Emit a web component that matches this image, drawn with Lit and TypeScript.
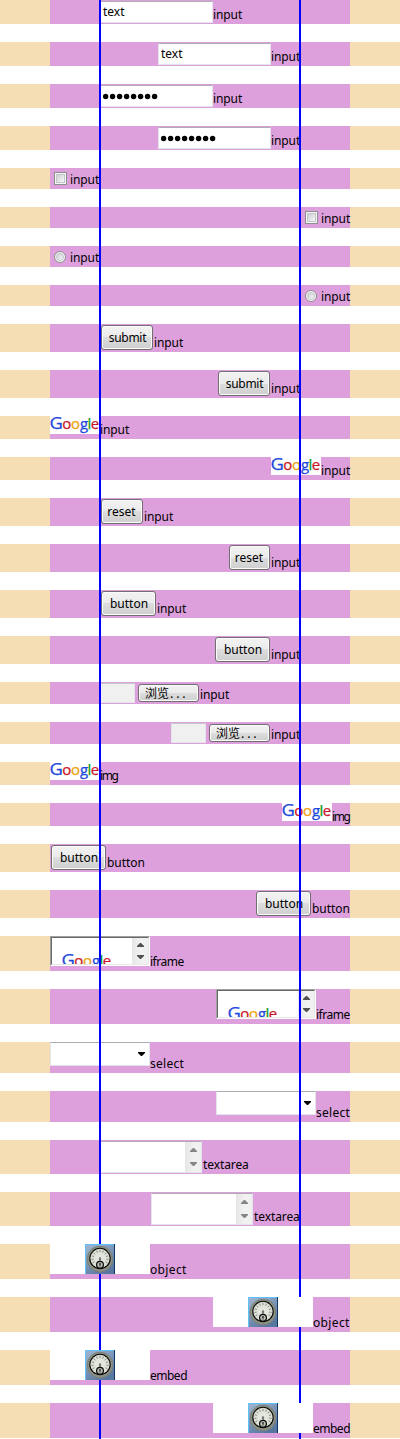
import { LitElement, html, css, svg, TemplateResult } from "lit";
import { customElement, property } from "lit/decorators.js";
import { classMap } from "lit/directives/class-map.js";
import { styleMap } from "lit/directives/style-map.js";

type Kind =
  | "text" | "password" | "checkbox" | "radio" | "submit" | "reset" | "button"
  | "file" | "image" | "iframe" | "select" | "textarea" | "object";

interface Sample {
  kind: Kind;
  label: string;
  height: number;
  /** Free space before the control when it is aligned to the left. */
  start: number;
  /** Free space after the label when it is aligned to the right. */
  end: number;
}

const SAMPLES: Sample[] = [
  { kind: "text", label: "input", height: 24, start: 50, end: 50 },
  { kind: "password", label: "input", height: 24, start: 50, end: 50 },
  { kind: "checkbox", label: "input", height: 21, start: 0, end: 0 },
  { kind: "radio", label: "input", height: 21, start: 0, end: 0 },
  { kind: "submit", label: "input", height: 28, start: 50, end: 50 },
  { kind: "image", label: "input", height: 23, start: 0, end: 0 },
  { kind: "reset", label: "input", height: 28, start: 50, end: 50 },
  { kind: "button", label: "input", height: 28, start: 50, end: 50 },
  { kind: "file", label: "input", height: 22, start: 50, end: 50 },
  { kind: "image", label: "img", height: 23, start: 0, end: 0 },
  { kind: "button", label: "button", height: 28, start: 0, end: 0 },
  { kind: "iframe", label: "iframe", height: 35, start: 0, end: 0 },
  { kind: "select", label: "select", height: 31, start: 0, end: 0 },
  { kind: "textarea", label: "textarea", height: 34, start: 50, end: 50 },
  { kind: "object", label: "object", height: 35, start: 0, end: 0 },
  { kind: "object", label: "embed", height: 35, start: 0, end: 0 },
];

/** Label name to [width, tracking] in pixels. */
const LABELS: Record<string, [number, number]> = {
  input: [29, -0.1], img: [18, -1.4], button: [38, -0.05], iframe: [34, -0.5],
  select: [34, 0.28], textarea: [46, -0.1], object: [37, 0.35], embed: [37, -0.5],
};

const logo = () => html`
  <svg class="logo" width="50" height="18" viewBox="0 0 50 18">
    <g font-family="Open Sans, sans-serif" font-size="15" stroke-width="0.25">
      <text x="-0.4" y="13" font-size="16" textLength="13.4" lengthAdjust="spacingAndGlyphs"
        fill="#1c48dc" stroke="#1c48dc">G</text>
      <text x="12.2" y="13" fill="#cc1426" stroke="#cc1426">o</text>
      <text x="21.1" y="13" fill="#eda20c" stroke="#eda20c">o</text>
      <text x="29.9" y="13" fill="#1c48dc" stroke="#1c48dc">g</text>
      <text x="37.4" y="13" fill="#0c981c" stroke="#0c981c">l</text>
      <text x="40.7" y="13" fill="#cc1426" stroke="#cc1426">e</text>
    </g>
  </svg>`;

const arrow = (up: boolean) => html`
  <svg width="7" height="4" viewBox="0 0 7 4">
    <path fill="currentColor" d=${up ? "M3 0h1l3 3v1H0V3z" : "M0 0h7v1L4 4H3L0 1z"}></path>
  </svg>`;

const scrollbar = () => html`<span class="scroll">${arrow(true)}${arrow(false)}</span>`;

const ticks = Array.from({ length: 11 }, (_, i) => {
  const a = ((150 + i * 24) * Math.PI) / 180;
  const c = Math.cos(a);
  const s = Math.sin(a);
  return svg`<line x1=${15 + 6.4 * c} y1=${14.5 + 6.4 * s} x2=${15 + 8.6 * c} y2=${14.5 + 8.6 * s}
    stroke="#7a7f78" stroke-width="0.9"></line>`;
});

const dial = () => html`
  <svg width="30" height="30" viewBox="0 0 30 30">
    <defs>
      <linearGradient id="bg" x1="0" y1="0" x2="0.6" y2="1">
        <stop offset="0" stop-color="#a3b8d2"></stop>
        <stop offset="1" stop-color="#58779f"></stop>
      </linearGradient>
      <radialGradient id="face">
        <stop offset="0" stop-color="#e8ebe2"></stop>
        <stop offset="1" stop-color="#d8dcd2"></stop>
      </radialGradient>
    </defs>
    <rect width="30" height="30" fill="url(#bg)"></rect>
    <path d="M29 0h1v30h-1z" fill="#0d3768"></path>
    <path d="M0 0h29v1H1v29H0z" fill="#5cc4fa"></path>
    <circle cx="15" cy="15" r="12.8" fill="#8c9085" stroke="#7b8178"></circle>
    <circle cx="15" cy="14.5" r="10.2" fill="url(#face)" stroke="#080a08" stroke-width="1.1"></circle>
    ${ticks}
    <path d="M15 13v4M13.8 15h2.4" stroke="#555" stroke-width="1"></path>
    <circle cx="15" cy="20.7" r="3.4" fill="#b9beb4" stroke="#080a08" stroke-width="1.2"></circle>
    <path d="M15 19v3.5M14 20h2" stroke="#333" stroke-width="1"></path>
  </svg>`;

@customElement("form-sample")
class FormSample extends LitElement {
  @property({ attribute: false }) sample!: Sample;
  @property({ type: Boolean }) right = false;

  static styles = css`
    :host { display: block; padding: 0 50px; background: #f5deb3; }
    .band {
      display: flex; align-items: flex-start; box-sizing: border-box;
      background: #dda0dd; white-space: nowrap;
    }
    .right { justify-content: flex-end; }
    .label { flex: none; align-self: flex-end; line-height: 19px; }
    .band > :not(.label), svg { flex: none; display: block; }
    .field {
      box-sizing: border-box; background: #fff; border: 1px solid #e2e6ec;
      border-top-color: #abadb3; border-radius: 1px;
    }
    .band > .line { width: 113px; height: 22px; margin-top: 1px; padding-left: 2px; line-height: 19px; }
    .band > .area { display: flex; justify-content: flex-end; width: 102px; height: 32px; margin: 1px 1px 0 0; }
    .band > .drop {
      display: flex; align-items: center; justify-content: flex-end;
      width: 100px; height: 24px; padding-right: 4px;
    }
    .band > .path { width: 35px; height: 20px; margin: 1px 3px 0 0; background: #f0f0f0; border-top-color: #c5c8cd; }
    .check {
      box-sizing: border-box; width: 13px; height: 13px; margin: 4px 3px 0 4px;
      border: 1px solid #8e8f8f; background: #f4f4f4; padding: 1px;
    }
    .mark {
      display: block; box-sizing: border-box; width: 9px; height: 9px;
      border: 1px solid #c3c7cc; background: linear-gradient(135deg, #cbcfd5, #f6f6f6);
    }
    .check.round { width: 12px; height: 12px; margin: 5px 4px 0 4px; border-radius: 50%; }
    .round .mark { width: 8px; height: 8px; border-radius: 50%; }
    .push {
      box-sizing: border-box; width: 55px; height: 25px; margin: 1px 1px 0 1px;
      border: 1px solid #707070; border-radius: 3px; text-align: center; line-height: 23px;
      background: linear-gradient(#f2f2f2, #ebebeb 50%, #dddddd 50%, #cfcfcf);
      box-shadow: inset 0 0 0 1px #fbfbfb; padding-left: 1px;
    }
    .submit { width: 52px; letter-spacing: -0.3px; }
    .reset { width: 42px; padding: 0 1px 0 0; }
    .right .reset { width: 41px; }
    .browse {
      width: 61px; height: 18px; margin: 2px 1px 0 0; padding: 0 0 0 6px; text-align: left;
      font: 12px/15px "Noto Sans CJK SC", sans-serif;
    }
    .dots { letter-spacing: 2.8px; margin-left: 1px; }
    .logo { background: #fff; overflow: visible; }
    .band > .frame {
      display: flex; justify-content: space-between; box-sizing: border-box;
      width: 100px; height: 30px; background: #fff; overflow: hidden;
      border: 1px solid #a0a0a0; border-right-color: #fff; border-bottom-color: #fff;
    }
    .view {
      display: flex; flex: 1; justify-content: space-between; overflow: hidden;
      border: 1px solid #696969; border-right-color: #e8e8e8; border-bottom-color: #e8e8e8;
    }
    .view .logo { margin: 15px 0 0 10px; }
    .scroll {
      display: flex; flex-direction: column; align-items: center; justify-content: space-between;
      box-sizing: border-box; width: 16px; padding: 5px 0; color: #505050;
      background: linear-gradient(90deg, #e6e6e6, #f2f2f2 60%, #efefef);
    }
    .area .scroll { color: #858585; padding: 6px 0; }
    .plugin { position: relative; z-index: 2; width: 100px; height: 30px; background: #fff; }
    .plugin svg { margin: 0 auto; }
  `;

  private control(): TemplateResult {
    const { kind } = this.sample;
    switch (kind) {
      case "text":
        return html`<span class="field line">text</span>`;
      case "password":
        return html`<span class="field line"><svg width="60" height="20" viewBox="0 0 60 20">
          ${Array.from({ length: 8 }, (_, i) => svg`<circle cx=${2.6 + i * 7} cy="10.5" r="2.7"></circle>`)}
        </svg></span>`;
      case "checkbox":
        return html`<span class="check"><span class="mark"></span></span>`;
      case "radio":
        return html`<span class="check round"><span class="mark"></span></span>`;
      case "file":
        return html`<span class="field path"></span><span class="push browse">浏览<span class="dots">...</span></span>`;
      case "image":
        return logo();
      case "iframe":
        return html`<span class="frame"><span class="view">${logo()}${scrollbar()}</span></span>`;
      case "select":
        return html`<span class="field drop">${arrow(false)}</span>`;
      case "textarea":
        return html`<span class="field area">${scrollbar()}</span>`;
      case "object":
        return html`<span class="plugin">${dial()}</span>`;
      default:
        return html`<span class="push ${kind}">${kind}</span>`;
    }
  }

  render() {
    const { height, start, end, label } = this.sample;
    const [width, tracking] = LABELS[label];
    return html`<div
      class=${classMap({ band: true, right: this.right })}
      style=${styleMap({
        height: `${height}px`,
        paddingLeft: this.right ? "0" : `${start}px`,
        paddingRight: this.right ? `${end}px` : "0",
      })}
    >${this.control()}<span class="label" style=${styleMap({
      width: `${width}px`,
      letterSpacing: `${tracking}px`,
    })}>${label}</span></div>`;
  }
}

@customElement("app-root")
class AppRoot extends LitElement {
  static styles = css`
    :host {
      display: block; position: relative; width: 400px; height: 1439px; overflow: hidden;
      background: #fff; color: #000; font: 12px "Noto Sans", sans-serif;
    }
    .list { display: flex; flex-direction: column; gap: 18px; }
    .guide { position: absolute; z-index: 1; top: 0; bottom: 0; width: 2px; background: #00f; }
    .first { left: 99px; }
    .second { left: 299px; }
  `;

  render() {
    return html`
      <div class="list">
        ${SAMPLES.map((s) => html`
          <form-sample .sample=${s}></form-sample>
          <form-sample .sample=${s} right></form-sample>`)}
      </div>
      <div class="guide first"></div>
      <div class="guide second"></div>`;
  }
}
